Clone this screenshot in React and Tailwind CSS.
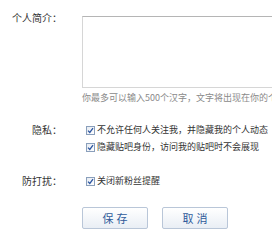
import React from "react";

function Check() {
  return (
    <span className="inline-flex items-center justify-center w-[9px] h-[9px] border border-[#8a9fbb] bg-gradient-to-br from-[#e6ebf2] to-[#ffffff] shrink-0">
      <svg width="7" height="7" viewBox="0 0 7 7">
        <path d="M1 3.6 L2.8 5.4 L6 1.2" fill="none" stroke="#2b55a0" strokeWidth="1.3" />
      </svg>
    </span>
  );
}

function CheckRow({ children }) {
  return (
    <div className="flex items-center gap-[2px] h-[12px] leading-[12px] whitespace-nowrap">
      <Check />
      <span>{children}</span>
    </div>
  );
}

export default function App() {
  return (
    <div className="w-[272px] h-[240px] bg-white overflow-hidden text-[#333] font-['Noto_Sans_CJK_SC','Noto_Sans_CJK_JP',sans-serif]">
      <div className="flex mt-[12px]">
        <div className="w-[62px] shrink-0 text-right text-[10px] leading-[12px]">个人简介：</div>
        <div className="ml-[20px] flex flex-col min-w-0">
          <div className="mt-[4px] h-[72px] w-[200px] border border-[#d6d6d6] border-t-[#b5b5b5] bg-white"></div>
          <div className="mt-[4px] text-[9px] leading-[12px] text-[#8a8a8a] whitespace-nowrap">
            你最多可以输入500个汉字，文字将出现在你的个人主页
          </div>
        </div>
      </div>

      <div className="flex mt-[20px]">
        <div className="w-[62px] shrink-0 text-right text-[10px] leading-[12px]">隐私：</div>
        <div className="ml-[24px] flex flex-col gap-[5px] text-[9px] min-w-0">
          <CheckRow>不允许任何人关注我，并隐藏我的个人动态</CheckRow>
          <CheckRow>隐藏贴吧身份，访问我的贴吧时不会展现</CheckRow>
        </div>
      </div>

      <div className="flex mt-[22px]">
        <div className="w-[62px] shrink-0 text-right text-[10px] leading-[12px]">防打扰：</div>
        <div className="ml-[24px] flex flex-col text-[9px]">
          <CheckRow>关闭新粉丝提醒</CheckRow>
        </div>
      </div>

      <div className="flex gap-[14px] ml-[82px] mt-[20px]">
        <button className="w-[66px] h-[22px] border border-[#b9c6d8] rounded-[2px] bg-gradient-to-b from-[#ffffff] to-[#e9eef5] text-[#2f5a9a] text-[11px] tracking-[3px] pl-[3px]">
          保存
        </button>
        <button className="w-[66px] h-[22px] border border-[#b9c6d8] rounded-[2px] bg-gradient-to-b from-[#ffffff] to-[#e9eef5] text-[#2f5a9a] text-[11px] tracking-[3px] pl-[3px]">
          取消
        </button>
      </div>
    </div>
  );
}
